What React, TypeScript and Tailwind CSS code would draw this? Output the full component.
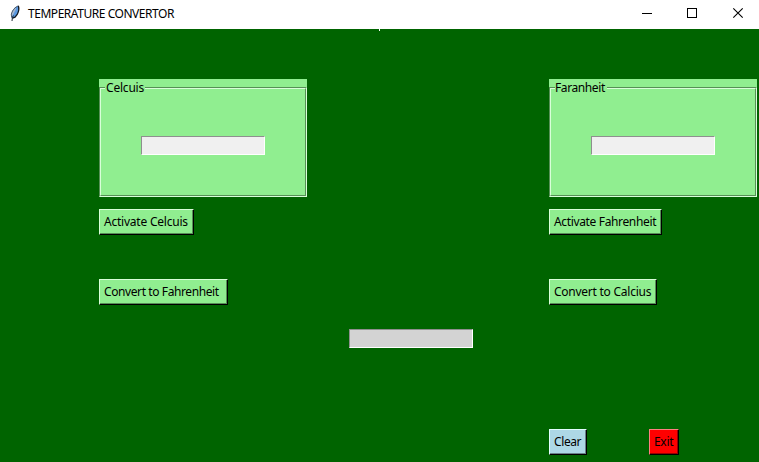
import type { ReactNode } from "react";

function Feather() {
  return (
    <svg width="12" height="17" viewBox="0 0 12 17" fill="none">
      <path d="M8.5 1 L10 1 L10 5 L8.5 9 L6 12 L3.5 13.5 L2.5 12.5 L2.2 9 L3.5 5.5 L6 2.5Z" fill="#5b98df" />
      <path d="M6.5 2.5 L3.5 6 L2.5 9 L2.5 12 L4.5 9 L7 4Z" fill="#a6b7ce" />
      <path d="M9.3 0.8 C10.4 4 9.6 7 8.2 9.5 L6 12.2 L3.5 13.2" stroke="#111820" strokeWidth="1.3" />
      <path d="M8.8 1 L6 2.8 L3.5 6 L2.3 9 L2.6 12.5" stroke="#4a5560" strokeWidth="0.9" />
      <path d="M4.4 10.5 L3.4 12.5 L3 16" stroke="#1c2733" strokeWidth="1" />
    </svg>
  );
}

function Group({ title, gap }: { title: string; gap: string }) {
  return (
    <section className="h-[118px] w-[208px] bg-[#90ee90] pt-2">
      <div className="h-[110px] border border-t-[#569056] border-l-[#569056] border-r-[#d8ffd8] border-b-[#d8ffd8]">
        <div className="h-full border border-t-[#d8ffd8] border-l-[#d8ffd8] border-r-[#569056] border-b-[#569056]">
          <div className={`-mt-2 ml-1 h-4 bg-[#90ee90] whitespace-nowrap leading-[14px] ${gap}`}>{title}</div>
          <div className="mt-[39px] ml-10">
            <Field color="bg-[#f0f0f0]" />
          </div>
        </div>
      </div>
    </section>
  );
}

function Field({ color }: { color: string }) {
  return (
    <div className={`h-[19px] w-[124px] border border-t-[#8f8f8f] border-l-[#8f8f8f] border-r-white border-b-white ${color}`} />
  );
}

function Button({ children, style }: { children: ReactNode; style: string }) {
  return (
    <button className={`block h-[26px] border border-r-black border-b-black text-left whitespace-nowrap ${style}`}>
      <span className="block h-full border-r border-b border-black/40 pl-1 leading-[24px]">{children}</span>
    </button>
  );
}

const green = "bg-[#90ee90] border-t-[#d8ffd8] border-l-[#d8ffd8]";

export default function App() {
  return (
    <div className="flex h-[462px] w-[759px] flex-col overflow-hidden bg-[#006400] font-['Noto_Sans','Open_Sans',sans-serif] text-[12px] text-black">
      <header className="flex h-[29px] shrink-0 bg-white">
        <div className="ml-[9px] pt-[5px]"><Feather /></div>
        <h1 className="ml-[7px] leading-[27px] tracking-[-0.46px] whitespace-nowrap">TEMPERATURE CONVERTOR</h1>
        <svg className="ml-auto" width="139" height="29" stroke="black" fill="none">
          <path d="M22 13.5H32" />
          <rect x="67.5" y="8.5" width="9" height="9" />
          <path d="M113.3 8.3L122.7 17.7M122.7 8.3L113.3 17.7" strokeWidth="1.1" />
        </svg>
      </header>
      <div className="ml-[379px] h-[2px] w-px shrink-0 bg-white" />
      <main className="grid grow grid-cols-[250px_200px_210px] grid-rows-[130px_70px_50px_100px_33px] pt-12 pl-[99px]">
        <Group title="Celcuis" gap="w-10 pl-px tracking-[-0.2px]" />
        <div />
        <Group title="Faranheit" gap="w-[52px] tracking-[-0.4px]" />
        <Button style={`w-[95px] tracking-[-0.22px] ${green}`}>Activate Celcuis</Button>
        <div />
        <Button style={`w-[113px] tracking-[-0.35px] ${green}`}>Activate Fahrenheit</Button>
        <Button style={`w-[129px] tracking-[-0.4px] ${green}`}>Convert to Fahrenheit</Button>
        <div />
        <Button style={`w-[108px] tracking-[-0.25px] ${green}`}>Convert to Calcius</Button>
        <div />
        <Field color="bg-[#d3d3d3]" />
        <div />
        <div />
        <div />
        <div className="flex gap-[62px]">
          <Button style="w-[38px] bg-[#add8e6] border-t-[#e2ffff] border-l-[#e2ffff] tracking-[-0.4px]">Clear</Button>
          <Button style="w-[30px] bg-[#ff0000] border-t-[#ff8080] border-l-[#ff8080] tracking-[-0.3px]">Exit</Button>
        </div>
      </main>
    </div>
  );
}
